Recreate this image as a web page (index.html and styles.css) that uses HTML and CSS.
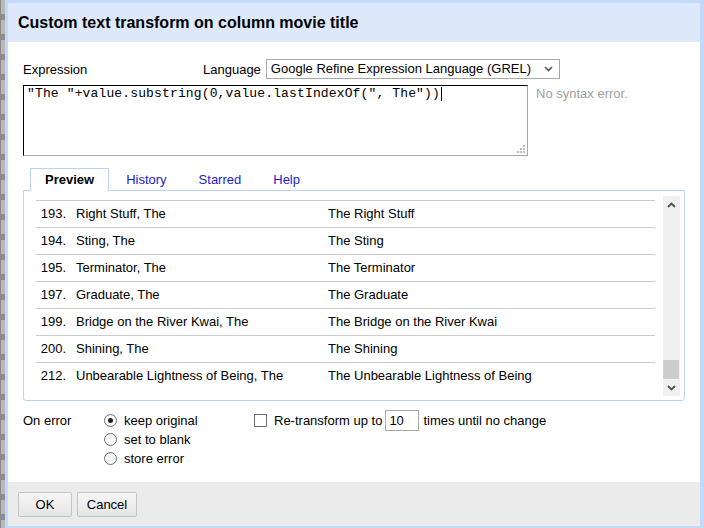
FILE: index.html
```html
<!DOCTYPE html>
<html>
<head>
<meta charset="utf-8">
<title>Custom text transform</title>
<link rel="stylesheet" href="styles.css">
</head>
<body>
<div class="screen">
  <div class="bg-strip"></div>
  <div class="dialog">
    <div class="dlg-header">Custom text transform on column movie title</div>
    <div class="dlg-body">
      <div class="expr-head">
        <span class="lbl-expr">Expression</span>
        <span class="lbl-lang">Language</span>
        <div class="select">
          <span class="select-text">Google Refine Expression Language (GREL)</span>
          <svg class="select-chev" width="9" height="6" viewBox="0 0 9 6"><path d="M1 1 L4.5 4.5 L8 1" fill="none" stroke="#555" stroke-width="1.6"/></svg>
        </div>
      </div>
      <div class="expr-row">
        <div class="code-box"><span class="code">"The "+value.substring(0,value.lastIndexOf(", The"))</span><span class="caret"></span><svg class="grip" width="10" height="10" viewBox="0 0 10 10">
            <rect x="7" y="1" width="2" height="2" fill="#bbb"/>
            <rect x="4" y="4" width="2" height="2" fill="#bbb"/>
            <rect x="7" y="4" width="2" height="2" fill="#bbb"/>
            <rect x="1" y="7" width="2" height="2" fill="#bbb"/>
            <rect x="4" y="7" width="2" height="2" fill="#bbb"/>
            <rect x="7" y="7" width="2" height="2" fill="#bbb"/>
          </svg></div>
        <div class="status">No syntax error.</div>
      </div>
      <div class="tabs">
        <div class="tab-list">
          <span class="tab active">Preview</span>
          <span class="tab">History</span>
          <span class="tab">Starred</span>
          <span class="tab">Help</span>
        </div>
        <div class="tab-panel">
          <div class="preview">
            <div class="rows">
              <div class="row"><span class="num">193.</span><span class="orig">Right Stuff, The</span><span class="res">The Right Stuff</span></div>
              <div class="row"><span class="num">194.</span><span class="orig">Sting, The</span><span class="res">The Sting</span></div>
              <div class="row"><span class="num">195.</span><span class="orig">Terminator, The</span><span class="res">The Terminator</span></div>
              <div class="row"><span class="num">197.</span><span class="orig">Graduate, The</span><span class="res">The Graduate</span></div>
              <div class="row"><span class="num">199.</span><span class="orig">Bridge on the River Kwai, The</span><span class="res">The Bridge on the River Kwai</span></div>
              <div class="row"><span class="num">200.</span><span class="orig">Shining, The</span><span class="res">The Shining</span></div>
              <div class="row"><span class="num">212.</span><span class="orig">Unbearable Lightness of Being, The</span><span class="res">The Unbearable Lightness of Being</span></div>
            </div>
            <div class="scrollbar">
              <div class="sb-btn"><svg width="9" height="6" viewBox="0 0 9 6"><path d="M1 5 L4.5 1.5 L8 5" fill="none" stroke="#505050" stroke-width="1.8"/></svg></div>
              <div class="sb-track"><div class="sb-thumb"></div></div>
              <div class="sb-btn"><svg width="9" height="6" viewBox="0 0 9 6"><path d="M1 1 L4.5 4.5 L8 1" fill="none" stroke="#505050" stroke-width="1.8"/></svg></div>
            </div>
          </div>
        </div>
      </div>
      <div class="options">
        <div class="lbl-onerror">On error</div>
        <div class="radio-group">
          <label class="radio-item"><span class="radio checked"></span>keep original</label>
          <label class="radio-item"><span class="radio"></span>set to blank</label>
          <label class="radio-item"><span class="radio"></span>store error</label>
        </div>
        <div class="repeat">
          <span class="checkbox"></span>
          <span>Re-transform up to</span>
          <span class="num-input">10</span>
          <span class="times">times until no change</span>
        </div>
      </div>
    </div>
    <div class="dlg-footer">
      <button class="btn btn-ok">OK</button>
      <button class="btn btn-cancel">Cancel</button>
    </div>
  </div>
</div>
</body>
</html>
```
FILE: styles.css
```css
* { box-sizing: border-box; }
html, body { margin: 0; padding: 0; }
body {
  font-family: "Liberation Sans", Arial, sans-serif;
  font-size: 13px;
  color: #000;
  background: #b0b0b0;
}
.screen {
  display: flex;
  width: 704px;
  height: 528px;
  overflow: hidden;
}
.bg-strip {
  width: 5px;
  flex: none;
  background: repeating-linear-gradient(#b9b9b9 0, #b9b9b9 14px, #8d8d8d 14px, #8d8d8d 20px);
  border-left: 1px solid #8a8a8a;
}
.dialog {
  flex: 1;
  height: 528px;
  display: flex;
  flex-direction: column;
  border: 3px solid #c3d9fb;
  border-right-width: 4px;
  border-bottom-width: 2px;
  background: #fff;
}
.dlg-header {
  height: 39px;
  flex: none;
  background: #dde9fb;
  padding-left: 10px;
  font-weight: bold;
  font-size: 16px;
  line-height: 40px;
}
.dlg-body {
  flex: 1;
  padding: 17px 0 0 15px;
}
.expr-head {
  display: flex;
  align-items: center;
  height: 20px;
}
.lbl-expr { width: 180px; }
.lbl-lang { margin-right: 5px; }
.select {
  width: 294px;
  height: 20px;
  border: 1px solid #a9a9a9;
  display: flex;
  align-items: center;
  justify-content: space-between;
  padding: 0 6px 0 4px;
}
.select-text { line-height: 18px; }
.expr-row {
  display: flex;
  margin-top: 6px;
}
.code-box {
  position: relative;
  width: 505px;
  height: 71px;
  border-top: 1px solid #000;
  border-left: 1px solid #000;
  border-right: 1px solid #a8a8a8;
  border-bottom: 1px solid #a8a8a8;
  padding: 1px 3px;
  font-family: "Liberation Mono", "Courier New", monospace;
  font-size: 13px;
  line-height: 14px;
}
.code {
  white-space: pre;
  letter-spacing: 0.14px;
}
.caret {
  display: inline-block;
  width: 1px;
  height: 14px;
  background: #000;
  vertical-align: top;
  margin-left: 1px;
}
.grip {
  position: absolute;
  right: 1px;
  bottom: 1px;
}
.status {
  margin-left: 8px;
  padding-top: 1px;
  line-height: 15px;
  color: #a0a0a0;
}
.tabs { margin-top: 12px; }
.tab-list {
  display: flex;
  gap: 2px;
  padding-left: 7px;
}
.tab {
  height: 23px;
  line-height: 22px;
  padding: 0 14px;
  border: 1px solid transparent;
  border-bottom: none;
  margin-bottom: -1px;
  color: #1d1dcc;
  position: relative;
}
.tab.active {
  color: #000;
  font-weight: bold;
  background: #fff;
  border-color: #bcd3f5;
  z-index: 1;
}
.tab-panel {
  width: 662px;
  height: 211px;
  border: 1px solid #bcd3f5;
  border-radius: 0 0 3px 3px;
  padding: 5px 4px 4px 12px;
}
.preview {
  display: flex;
  gap: 8px;
  height: 200px;
}
.rows {
  width: 619px;
  padding-top: 4px;
  overflow: hidden;
}
.row {
  display: flex;
  align-items: center;
  height: 27px;
  padding-bottom: 1px;
  border-top: 1px solid #cccccc;
}
.num {
  width: 30px;
  text-align: right;
}
.orig {
  width: 252px;
  margin-left: 10px;
}
.scrollbar {
  width: 17px;
  background: #f0f0f0;
  display: flex;
  flex-direction: column;
}
.sb-btn {
  height: 17px;
  display: flex;
  align-items: center;
  justify-content: center;
}
.sb-track {
  flex: 1;
  display: flex;
  flex-direction: column;
  justify-content: flex-end;
}
.sb-thumb {
  height: 19px;
  margin: 0 1px 0 0;
  background: #cdcdcd;
}
.options {
  display: flex;
  align-items: flex-start;
  margin-top: 9px;
}
.lbl-onerror {
  width: 81px;
  line-height: 21px;
}
.radio-group {
  width: 150px;
  padding-top: 1px;
  display: flex;
  flex-direction: column;
}
.radio-item {
  display: flex;
  align-items: center;
  height: 19px;
}
.radio {
  width: 13px;
  height: 13px;
  border-radius: 50%;
  border: 1px solid #6e6e6e;
  background: linear-gradient(#f4f4f4, #ffffff);
  margin-right: 7px;
  display: flex;
  align-items: center;
  justify-content: center;
}
.radio.checked::after {
  content: "";
  width: 5px;
  height: 5px;
  border-radius: 50%;
  background: #222;
}
.repeat {
  display: flex;
  align-items: center;
  height: 21px;
}
.checkbox {
  width: 13px;
  height: 13px;
  border: 1px solid #6e6e6e;
  background: #fff;
  margin-right: 7px;
}
.num-input {
  width: 34px;
  height: 21px;
  border: 1px solid #a9a9a9;
  padding-left: 3px;
  line-height: 19px;
  margin-left: 3px;
}
.times { margin-left: 4px; }
.dlg-footer {
  height: 44px;
  flex: none;
  background: #ebebeb;
  padding: 10px 0 0 10px;
  display: flex;
  gap: 5px;
  align-items: flex-start;
}
.btn {
  height: 25px;
  border: 1px solid #c3c3c3;
  border-radius: 2px;
  background: linear-gradient(#f7f7f7, #e5e5e5);
  font-family: "Liberation Sans", Arial, sans-serif;
  font-size: 13px;
  color: #000;
  padding: 0;
}
.btn-ok { width: 54px; }
.btn-cancel { width: 60px; }
```
